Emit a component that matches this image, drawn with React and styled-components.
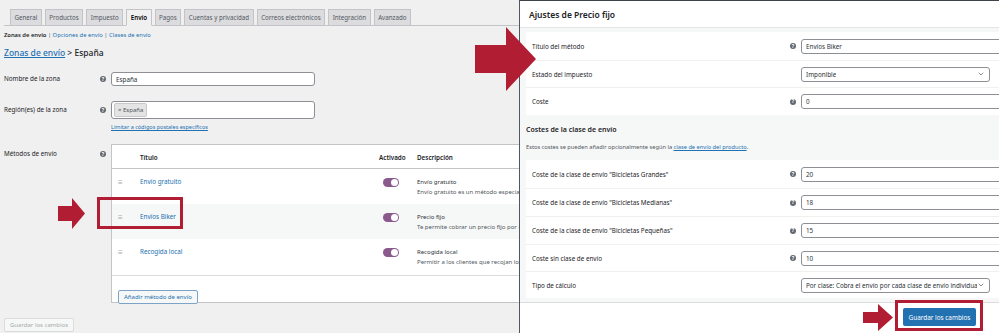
import React from 'react';
import styled, { createGlobalStyle } from 'styled-components';
import { ChevronDown } from 'lucide-react';

const GlobalStyle = createGlobalStyle`
  * { box-sizing: border-box; }
  body {
    margin: 0;
    background: #fff;
    font-family: 'Noto Sans', 'Open Sans', sans-serif;
    color: #1d2327;
  }
`;

const Screen = styled.div`
  position: relative;
  display: flex;
  width: 999px;
  height: 333px;
  overflow: hidden;
`;

/* ---------- left: shipping zone page ---------- */

const AdminPage = styled.div`
  width: 519px;
  flex-shrink: 0;
  height: 333px;
  background: #f0f0f1;
  padding: 9px 0 0 4px;
  overflow: hidden;
`;

const TabBar = styled.div`
  display: flex;
  gap: 3px;
  height: 17px;
  padding-left: 6px;
  border-bottom: 1px solid #c3c4c7;
`;

const Tab = styled.span`
  height: 17px;
  padding: 0 3.5px;
  line-height: 15px;
  font-size: 6.2px;
  white-space: nowrap;
  color: ${p => (p.$active ? '#000' : '#50575e')};
  font-weight: ${p => (p.$active ? 600 : 400)};
  background: ${p => (p.$active ? '#f0f0f1' : '#dcdcde')};
  border: 1px solid #c3c4c7;
  border-bottom-color: ${p => (p.$active ? '#f0f0f1' : '#c3c4c7')};
`;

const SubNav = styled.div`
  margin-top: 4px;
  line-height: 10px;
  font-size: 5.8px;
  color: #50575e;
  b { color: #1d2327; font-weight: 600; }
  a { color: #2271b1; text-decoration: none; }
`;

const Heading = styled.div`
  margin-top: 7px;
  line-height: 12px;
  font-size: 8.5px;
  font-weight: 500;
  a { color: #2271b1; text-decoration: underline; }
`;

const FormRow = styled.div`
  display: grid;
  grid-template-columns: 96px 11px 1fr;
  align-items: start;
  margin-top: ${p => p.$top}px;
`;

const Label = styled.div`
  font-size: 6.3px;
  line-height: ${p => p.$lh || 14}px;
  padding-top: ${p => p.$pt || 0}px;
  white-space: nowrap;
`;

const HelpCell = styled.div`
  display: flex;
  align-items: center;
  height: ${p => p.$h || 14}px;
  margin-top: ${p => p.$pt || 0}px;
`;

const HelpIcon = styled.span`
  display: inline-flex;
  align-items: center;
  justify-content: center;
  width: 6px;
  height: 6px;
  border-radius: 50%;
  background: #646970;
  color: #fff;
  font-size: 5px;
  font-weight: 700;
  line-height: 1;
`;

const TextInput = styled.div`
  width: ${p => p.$w || 204}px;
  height: ${p => p.$h || 14}px;
  display: flex;
  align-items: center;
  gap: 4px;
  padding: 0 ${p => (p.$tight ? 2 : 4)}px;
  background: #fff;
  border: 1px solid #8c8f94;
  border-radius: 3px;
  font-size: 6.3px;
  color: #2c3338;
  white-space: nowrap;
  overflow: hidden;
`;

const Token = styled.span`
  padding: 2px 3px;
  background: #e4e4e4;
  border: 1px solid #c8c8c8;
  border-radius: 2px;
  font-size: 6px;
  line-height: 8px;
  color: #50575e;
`;

const SmallLink = styled.a`
  display: block;
  margin-top: 4px;
  line-height: 8px;
  font-size: 5.5px;
  color: #2271b1;
  text-decoration: underline;
`;

const MethodsTable = styled.div`
  width: 420px;
  background: #fff;
  border: 1px solid #c3c4c7;
  border-right: none;
`;

const MethodGrid = styled.div`
  display: grid;
  grid-template-columns: 28px 239px 38px 1fr;
  align-items: start;
  height: ${p => p.$h}px;
  padding-top: ${p => p.$pt}px;
  background: ${p => (p.$alt ? '#f6f7f7' : '#fff')};
  border-bottom: ${p => (p.$head ? '1px solid #c3c4c7' : 'none')};
  font-size: 6px;
  white-space: nowrap;
`;

const HeadCell = styled.div`
  font-size: 6.3px;
  font-weight: 600;
  line-height: 10px;
  color: #1d2327;
`;

const Handle = styled.div`
  padding-left: 6px;
  line-height: 10px;
  font-size: 8px;
  color: #a7aaad;
`;

const MethodLink = styled.a`
  line-height: 10px;
  font-size: 6.3px;
  color: #2271b1;
  text-decoration: none;
`;

const ToggleCell = styled.div`
  padding: 1px 0 0 4px;
`;

const Toggle = styled.span`
  display: block;
  position: relative;
  width: 16px;
  height: 9px;
  border-radius: 5px;
  background: #8a5a8d;
  &::after {
    content: '';
    position: absolute;
    right: 1px;
    top: 1px;
    width: 7px;
    height: 7px;
    border-radius: 50%;
    background: #fff;
  }
`;

const Desc = styled.div`
  line-height: 10px;
  font-size: 6px;
  color: #50575e;
  overflow: hidden;
  strong { display: block; font-weight: 400; color: #2c3338; }
`;

const TableFoot = styled.div`
  height: 27px;
  padding: 6px 0 0 6px;
  border-top: 1px solid #dcdcde;
`;

const OutlineButton = styled.span`
  display: inline-flex;
  align-items: center;
  height: 14px;
  padding: 0 5px;
  font-size: 6px;
  color: ${p => (p.$disabled ? '#a7aaad' : '#2271b1')};
  background: #f6f7f7;
  border: 1px solid ${p => (p.$disabled ? '#dcdcde' : '#7ea3c8')};
  border-radius: 2px;
`;

const SaveRow = styled.div`
  margin-top: 7px;
`;

/* ---------- right: settings modal ---------- */

const Modal = styled.div`
  flex: 1;
  height: 333px;
  display: flex;
  flex-direction: column;
  background: #f6f7f7;
  border-top: 1px solid #3c434a;
  border-left: 1px solid #50575e;
  overflow: hidden;
`;

const ModalHeader = styled.div`
  height: 27px;
  flex-shrink: 0;
  display: flex;
  align-items: center;
  padding-left: 9px;
  background: #fff;
  border-bottom: 1px solid #e5e5e5;
  font-size: 8.5px;
  font-weight: 600;
`;

const ModalBody = styled.div`
  flex: 1;
  padding: 4px 0 0 6px;
`;

const Card = styled.div`
  width: calc(100% + 30px);
  background: #fff;
`;

const SettingRow = styled.div`
  display: grid;
  grid-template-columns: 258px 11px 1fr;
  align-items: center;
  height: ${p => p.$h || 28}px;
  padding-left: 6px;
  border-top: ${p => (p.$first ? 'none' : '1px solid #f0f0f1')};
  font-size: 6.3px;
  white-space: nowrap;
`;

const Field = styled.div`
  display: flex;
  align-items: center;
  justify-content: space-between;
  width: ${p => (p.$select ? '189px' : '100%')};
  height: 15px;
  padding: 0 4px;
  background: #fff;
  border: 1px solid #8c8f94;
  border-radius: 3px;
  font-size: 6.3px;
  color: #2c3338;
  white-space: nowrap;
  overflow: hidden;
  svg { flex-shrink: 0; color: #50575e; }
`;

const FieldText = styled.span`
  overflow: hidden;
`;

const SectionTitle = styled.div`
  margin-top: 10px;
  line-height: 10px;
  font-size: 7px;
  font-weight: 600;
`;

const SectionNote = styled.div`
  margin: 8px 0 9px;
  line-height: 8px;
  font-size: 5.7px;
  color: #50575e;
  white-space: nowrap;
  a { color: #2271b1; text-decoration: underline; }
`;

const ModalFooter = styled.div`
  height: 31px;
  flex-shrink: 0;
  display: flex;
  justify-content: flex-end;
  padding: 5px 23px 0 0;
  background: #fff;
  border-top: 1px solid #dcdcde;
`;

const PrimaryButton = styled.span`
  display: inline-flex;
  align-items: center;
  justify-content: center;
  width: 73px;
  height: 18px;
  background: #2271b1;
  border-radius: 2px;
  color: #fff;
  font-size: 6.4px;
`;

/* ---------- annotations ---------- */

const Arrow = styled.svg`
  position: absolute;
  left: ${p => p.$x}px;
  top: ${p => p.$y}px;
  fill: #b11d33;
`;

const Highlight = styled.div`
  position: absolute;
  left: ${p => p.$x}px;
  top: ${p => p.$y}px;
  width: ${p => p.$w}px;
  height: ${p => p.$h}px;
  border: 3px solid #b11d33;
`;

const tabs = ['General', 'Productos', 'Impuesto', 'Envío', 'Pagos', 'Cuentas y privacidad', 'Correos electrónicos', 'Integración', 'Avanzado'];

const methods = [
  { name: 'Envío gratuito', title: 'Envío gratuito', text: 'Envío gratuito es un método especial que puede ser activado con cupones y gastos mínimos.' },
  { name: 'Envíos Biker', title: 'Precio fijo', text: 'Te permite cobrar un precio fijo por el envío.', alt: true },
  { name: 'Recogida local', title: 'Recogida local', text: 'Permitir a los clientes que recojan los pedidos ellos mismos.' },
];

const classCosts = [
  { label: 'Coste de la clase de envío "Bicicletas Grandes"', value: '20' },
  { label: 'Coste de la clase de envío "Bicicletas Medianas"', value: '18' },
  { label: 'Coste de la clase de envío "Bicicletas Pequeñas"', value: '15' },
  { label: 'Coste sin clase de envío', value: '10', h: 27 },
];

const Help = () => <HelpIcon>?</HelpIcon>;

export default function App() {
  return (
    <Screen>
      <GlobalStyle />
      <AdminPage>
        <TabBar>
          {tabs.map(t => (
            <Tab key={t} $active={t === 'Envío'}>{t}</Tab>
          ))}
        </TabBar>
        <SubNav>
          <b>Zonas de envío</b> | <a>Opciones de envío</a> | <a>Clases de envío</a>
        </SubNav>
        <Heading>
          <a>Zonas de envío</a> &gt; España
        </Heading>

        <FormRow $top={13}>
          <Label>Nombre de la zona</Label>
          <HelpCell><Help /></HelpCell>
          <TextInput>España</TextInput>
        </FormRow>

        <FormRow $top={15}>
          <Label $lh={18}>Región(es) de la zona</Label>
          <HelpCell $h={18}><Help /></HelpCell>
          <div>
            <TextInput $h={18} $tight><Token>× España</Token></TextInput>
            <SmallLink>Limitar a códigos postales específicos</SmallLink>
          </div>
        </FormRow>

        <FormRow $top={13}>
          <Label $lh={10} $pt={5}>Métodos de envío</Label>
          <HelpCell $h={10} $pt={5}><Help /></HelpCell>
          <div>
            <MethodsTable>
              <MethodGrid $head $h={24} $pt={8}>
                <span />
                <HeadCell>Título</HeadCell>
                <HeadCell>Activado</HeadCell>
                <HeadCell>Descripción</HeadCell>
              </MethodGrid>
              {methods.map(m => (
                <MethodGrid key={m.name} $h={m.name === 'Recogida local' ? 36 : 35} $pt={8} $alt={m.alt}>
                  <Handle>≡</Handle>
                  <MethodLink>{m.name}</MethodLink>
                  <ToggleCell><Toggle /></ToggleCell>
                  <Desc>
                    <strong>{m.title}</strong>
                    {m.text}
                  </Desc>
                </MethodGrid>
              ))}
              <TableFoot>
                <OutlineButton>Añadir método de envío</OutlineButton>
              </TableFoot>
            </MethodsTable>
          </div>
        </FormRow>

        <SaveRow>
          <OutlineButton $disabled>Guardar los cambios</OutlineButton>
        </SaveRow>
      </AdminPage>

      <Modal>
        <ModalHeader>Ajustes de Precio fijo</ModalHeader>
        <ModalBody>
          <Card>
            <SettingRow $first>
              <span>Título del método</span>
              <Help />
              <Field>Envíos Biker</Field>
            </SettingRow>
            <SettingRow $h={27}>
              <span>Estado del impuesto</span>
              <span />
              <Field $select>
                <FieldText>Imponible</FieldText>
                <ChevronDown size={8} strokeWidth={2} />
              </Field>
            </SettingRow>
            <SettingRow>
              <span>Coste</span>
              <Help />
              <Field>0</Field>
            </SettingRow>
          </Card>

          <SectionTitle>Costes de la clase de envío</SectionTitle>
          <SectionNote>
            Estos costes se pueden añadir opcionalmente según la <a>clase de envío del producto</a>.
          </SectionNote>

          <Card>
            {classCosts.map((c, i) => (
              <SettingRow key={c.label} $first={i === 0} $h={c.h}>
                <span>{c.label}</span>
                <Help />
                <Field>{c.value}</Field>
              </SettingRow>
            ))}
            <SettingRow $h={27}>
              <span>Tipo de cálculo</span>
              <span />
              <Field $select>
                <FieldText>Por clase: Cobra el envío por cada clase de envío individualmente</FieldText>
                <ChevronDown size={8} strokeWidth={2} />
              </Field>
            </SettingRow>
          </Card>
        </ModalBody>
        <ModalFooter>
          <PrimaryButton>Guardar los cambios</PrimaryButton>
        </ModalFooter>
      </Modal>

      <Arrow $x={475} $y={27} width="62" height="64" viewBox="0 0 62 64">
        <polygon points="0,18 31,18 31,0 61,32 31,64 31,46 0,46" />
      </Arrow>
      <Arrow $x={58} $y={198} width="28" height="31" viewBox="0 0 28 31">
        <polygon points="0,8 14,8 14,0 27,15.5 14,31 14,23 0,23" />
      </Arrow>
      <Arrow $x={863} $y={304} width="31" height="27" viewBox="0 0 31 27">
        <polygon points="0,8 15,8 15,0 30,13.5 15,27 15,19 0,19" />
      </Arrow>
      <Highlight $x={97} $y={197} $w={86} $h={32} />
      <Highlight $x={895} $y={300} $w={88} $h={31} />
    </Screen>
  );
}
